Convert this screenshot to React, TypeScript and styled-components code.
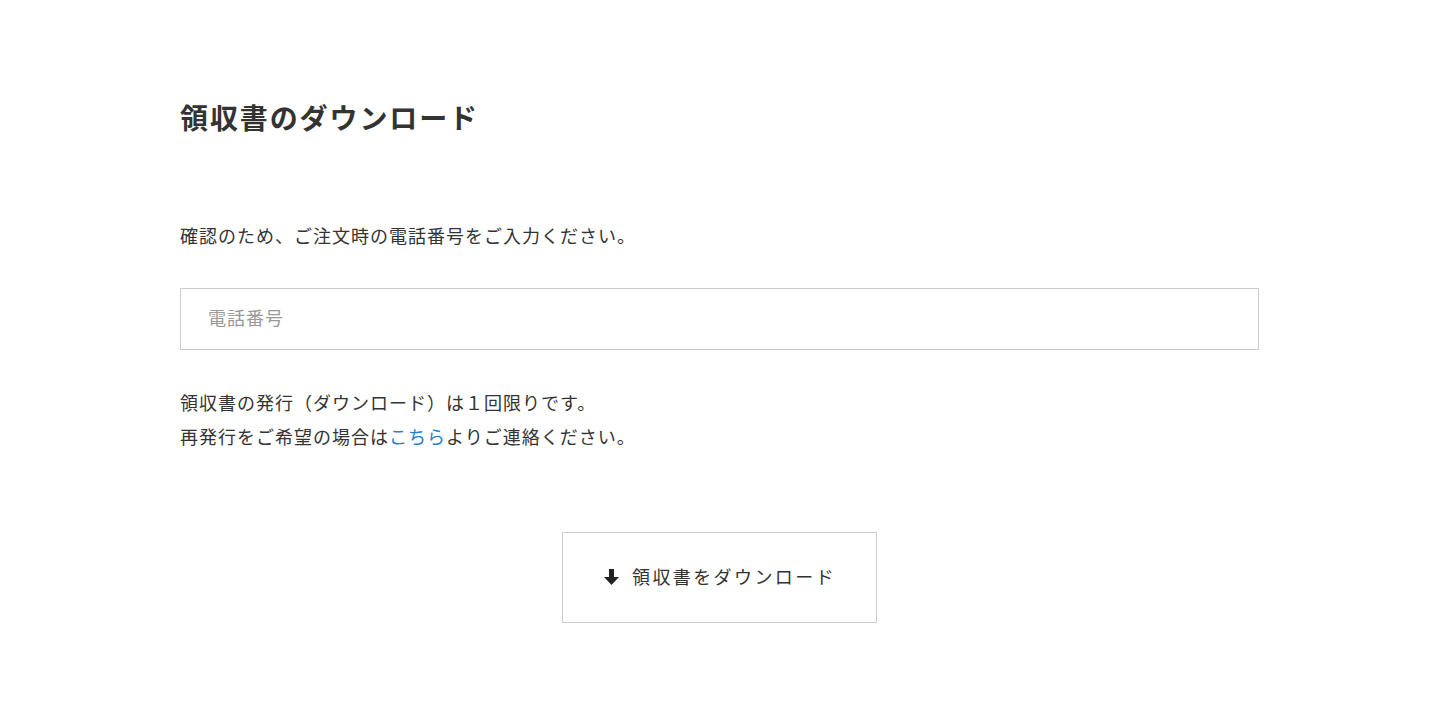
import React, { useState } from "react";
import styled, { createGlobalStyle } from "styled-components";

const GlobalStyle = createGlobalStyle`
  body {
    margin: 0;
    background: #ffffff;
    font-family: "Noto Sans CJK JP", "Noto Sans", sans-serif;
    color: #333333;
  }
`;

const Page = styled.div`
  width: 1079px;
  margin: 0 0 0 180px;
  padding-top: 96px;
`;

const Title = styled.h1`
  margin: 0;
  font-size: 28px;
  line-height: 42px;
  font-weight: 700;
  letter-spacing: 1.9px;
  color: #333333;
`;

const Text = styled.p<{ $top?: number }>`
  margin: ${(p) => p.$top ?? 0}px 0 0;
  font-size: 18px;
  line-height: 34px;
  letter-spacing: 1px;
  color: #333333;
`;

const PhoneInput = styled.input`
  display: block;
  box-sizing: border-box;
  width: 100%;
  height: 62px;
  margin-top: 36px;
  padding: 0 27px 4px;
  border: 1px solid #cccccc;
  border-radius: 0;
  font-family: inherit;
  font-size: 18px;
  letter-spacing: 1px;
  color: #333333;
  outline: none;

  &::placeholder {
    color: #999999;
  }
`;

const Notes = styled.div`
  margin-top: 35px;
`;

const Link = styled.a`
  color: #2a7ec6;
  text-decoration: none;
`;

const ButtonRow = styled.div`
  display: flex;
  justify-content: center;
  margin-top: 79px;
`;

const DownloadButton = styled.button`
  display: flex;
  align-items: center;
  justify-content: center;
  gap: 13px;
  box-sizing: border-box;
  width: 315px;
  height: 91px;
  margin-left: -1px;
  padding: 0 0 3px 2px;
  background: #ffffff;
  border: 1px solid #cccccc;
  font-family: inherit;
  font-size: 18px;
  letter-spacing: 2.4px;
  color: #333333;
  cursor: pointer;

  svg {
    margin-top: 2px;
  }
`;

const ArrowIcon = () => (
  <svg width="15" height="16" viewBox="0 0 15 16" aria-hidden="true">
    <path d="M5 0h5v8h5l-7.5 8L0 8h5z" fill="#222222" />
  </svg>
);

export default function App() {
  const [phone, setPhone] = useState("");

  return (
    <>
      <GlobalStyle />
      <Page>
        <Title>領収書のダウンロード</Title>
        <Text $top={80}>確認のため、ご注文時の電話番号をご入力ください。</Text>
        <PhoneInput
          type="tel"
          placeholder="電話番号"
          value={phone}
          onChange={(e) => setPhone(e.target.value)}
        />
        <Notes>
          <Text>領収書の発行（ダウンロード）は１回限りです。</Text>
          <Text>
            再発行をご希望の場合は<Link href="#">こちら</Link>よりご連絡ください。
          </Text>
        </Notes>
        <ButtonRow>
          <DownloadButton>
            <ArrowIcon />
            領収書をダウンロード
          </DownloadButton>
        </ButtonRow>
      </Page>
    </>
  );
}
